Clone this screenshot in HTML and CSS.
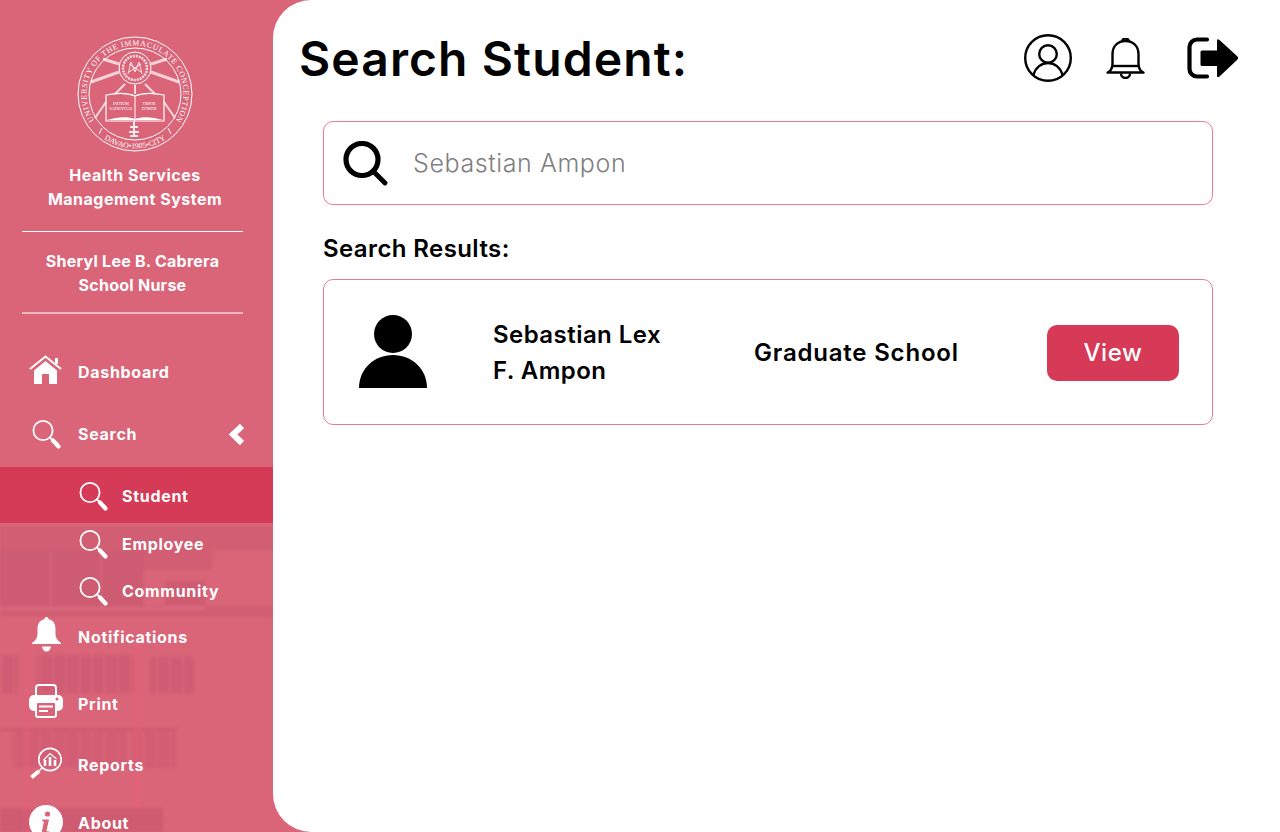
FILE: index.html
```html
<!DOCTYPE html>
<html lang="en">
<head>
  <meta charset="UTF-8">
  <title>Search Student</title>
  <link rel="stylesheet" href="styles.css">
</head>
<body>
  <div class="app">
    <aside class="sidebar">
      <!-- faded building photo behind the menu -->
      <svg class="building" viewBox="0 0 273 832" aria-hidden="true">
        <defs>
          <pattern id="panes" width="13" height="40" patternUnits="userSpaceOnUse">
            <rect width="13" height="40" fill="#c4526a"/>
            <rect width="2" height="40" fill="#d8647a"/>
          </pattern>
        </defs>
        <path d="M0 526H273V550H213V570H143V606H273V617H0z" fill="#c9586d" opacity=".5"/>
        <rect x="0" y="550" width="143" height="56" fill="#c9586d" opacity=".4"/>
        <rect x="165" y="581" width="40" height="24" fill="#c4526a" opacity=".5"/>
        <rect x="50" y="552" width="2" height="54" fill="#de6c80" opacity=".6"/>
        <rect x="100" y="552" width="2" height="54" fill="#de6c80" opacity=".6"/>
        <rect x="0" y="607" width="205" height="3" fill="#e07689" opacity=".5"/>
        <rect x="0" y="655" width="18" height="38" fill="url(#panes)" opacity=".42"/>
        <rect x="36" y="655" width="98" height="38" fill="url(#panes)" opacity=".42"/>
        <rect x="150" y="657" width="44" height="36" fill="url(#panes)" opacity=".42"/>
        <rect x="0" y="728" width="178" height="3" fill="#c4526a" opacity=".5"/>
        <rect x="12" y="731" width="115" height="37" fill="url(#panes)" opacity=".32"/>
        <rect x="130" y="731" width="46" height="37" fill="url(#panes)" opacity=".32"/>
        <rect x="0" y="808" width="163" height="24" fill="#c4526a" opacity=".5"/>
        <rect x="24" y="640" width="6" height="192" fill="#e85f78" opacity=".35"/>
        <rect x="134" y="640" width="7" height="168" fill="#e85f78" opacity=".4"/>
      </svg>

      <div class="brand">
        <svg class="logo" width="116" height="116" viewBox="0 0 116 116" fill="none" stroke="#fff">
          <defs>
            <path id="logoTop" d="M18.300 85.800A48.500 48.500 0 1 1 97.700 85.800"/>
            <path id="logoBottom" d="M21 98A54.500 54.500 0 0 0 95 98"/>
          </defs>
          <circle cx="58" cy="58" r="57" stroke-width="1"/>
          <circle cx="58" cy="58" r="46" stroke-width="1"/>
          <text class="logo-ring" fill="#fff" stroke="none"><textPath href="#logoTop" startOffset="50%" text-anchor="middle" textLength="208">UNIVERSITY OF THE IMMACULATE CONCEPTION</textPath></text>
          <text class="logo-ring" fill="#fff" stroke="none"><textPath href="#logoBottom" startOffset="50%" text-anchor="middle">DAVAO•1905•CITY</textPath></text>
          <path d="M42 28L26 23M42 36L14 46M74 28L90 23M74 36L102 46" stroke-width="3" opacity=".7"/>
          <path d="M48 48L38 58M68 48L78 58M58 49V58M29 66L18 82M87 66L98 82" stroke-width="2" opacity=".75"/>
          <circle cx="58" cy="32" r="16" stroke-width="1"/>
          <circle cx="58" cy="32" r="12" stroke-width="2.500" stroke-dasharray="2 1" opacity=".8"/>
          <path d="M51 38L54 26L58 36L62 26L65 38M52 28L64 36M64 28L52 36" stroke-width=".8"/>
          <path d="M29 59c10-2 22-2 29 1c7-3 19-3 29-1v26H29z" stroke-width="1.200"/>
          <path d="M58 60v25" stroke-width="1"/>
          <path d="M30 84c10-3 20-4 28-1c8-3 18-2 28 1z" fill="#fff" stroke="none"/>
          <text class="logo-book" x="44" y="69" fill="#fff" stroke="none" text-anchor="middle">INITIUM</text>
          <text class="logo-book" x="44" y="74" fill="#fff" stroke="none" text-anchor="middle">SAPIENTIAE</text>
          <text class="logo-book" x="72" y="69" fill="#fff" stroke="none" text-anchor="middle">TIMOR</text>
          <text class="logo-book" x="72" y="74" fill="#fff" stroke="none" text-anchor="middle">DOMINI</text>
          <path d="M57 85v16M53 91h8M52 96h10M53 100h8" stroke-width="2" opacity=".85"/>
          <path d="M22 98l3-6M94 98l-3-6" stroke-width="1"/>
        </svg>
        <p class="brand-line brand-title">Health Services<br>Management System</p>
        <hr class="rule">
        <p class="brand-line brand-user">Sheryl Lee B. Cabrera<br>School Nurse</p>
        <hr class="rule rule-thick">
      </div>

      <nav class="menu">
        <a class="item">
          <svg class="ico ico-up" width="33" height="29" viewBox="0 0 33 29" fill="#fff">
            <path d="M1 14L16.500 1.500L32 14" fill="none" stroke="#fff" stroke-width="2"/>
            <rect x="26" y="3" width="3" height="6"/>
            <path d="M5 15.500L16.500 6L28 15.500V29H20V19H13V29H5z"/>
          </svg>
          <span>Dashboard</span>
        </a>
        <a class="item">
          <svg class="ico ico-lens" width="29" height="29" viewBox="0 0 29 29" fill="none" stroke="#fff" stroke-linecap="round">
            <circle cx="11" cy="10.500" r="9.600" stroke-width="1.800"/>
            <path d="M18 17.500l2 2" stroke-width="1.800"/>
            <path d="M21 20.500l5.500 6" stroke-width="4.200"/>
          </svg>
          <span>Search</span>
          <svg class="chev" width="17" height="23" viewBox="0 0 17 23" fill="none" stroke="#fff">
            <path d="M14 3L5 11.500L14 20" stroke-width="6"/>
          </svg>
        </a>
        <a class="item sub active">
          <svg class="ico" width="29" height="29" viewBox="0 0 29 29" fill="none" stroke="#fff" stroke-linecap="round">
            <circle cx="11" cy="10.500" r="9.600" stroke-width="1.800"/>
            <path d="M18 17.500l2 2" stroke-width="1.800"/>
            <path d="M21 20.500l5.500 6" stroke-width="4.200"/>
          </svg>
          <span>Student</span>
        </a>
        <a class="item sub sub-a">
          <svg class="ico" width="29" height="29" viewBox="0 0 29 29" fill="none" stroke="#fff" stroke-linecap="round">
            <circle cx="11" cy="10.500" r="9.600" stroke-width="1.800"/>
            <path d="M18 17.500l2 2" stroke-width="1.800"/>
            <path d="M21 20.500l5.500 6" stroke-width="4.200"/>
          </svg>
          <span>Employee</span>
        </a>
        <a class="item sub sub-b">
          <svg class="ico" width="29" height="29" viewBox="0 0 29 29" fill="none" stroke="#fff" stroke-linecap="round">
            <circle cx="11" cy="10.500" r="9.600" stroke-width="1.800"/>
            <path d="M18 17.500l2 2" stroke-width="1.800"/>
            <path d="M21 20.500l5.500 6" stroke-width="4.200"/>
          </svg>
          <span>Community</span>
        </a>
        <a class="item item-notif">
          <svg class="ico ico-lens ico-up" width="29" height="35" viewBox="0 0 29 35" fill="#fff">
            <path d="M14.500 0c1.300 0 2.200 1 2.200 2.300c5 1 6.800 5 6.800 10v5c0 3.500 2 6.500 5.500 8.700v1H0v-1c3.500-2.200 5.500-5.200 5.500-8.700v-5c0-5 1.800-9 6.800-10c0-1.300.9-2.300 2.200-2.300z"/>
            <path d="M10 29.500h9c-.5 3-2.200 5-4.500 5s-4-2-4.500-5z"/>
          </svg>
          <span>Notifications</span>
        </a>
        <a class="item item-print">
          <svg class="ico ico-up" width="34" height="34" viewBox="0 0 34 34">
            <rect x="7" y="1" width="20" height="13" rx="3" fill="none" stroke="#fff" stroke-width="2"/>
            <rect x="0" y="11" width="34" height="16" rx="5" fill="#fff"/>
            <rect x="7" y="18" width="20" height="15" rx="2" fill="#da6579" stroke="#fff" stroke-width="2"/>
            <path d="M10 22.500h14M10 27h9" stroke="#fff" stroke-width="2"/>
            <circle cx="28" cy="15" r="1.500" fill="#da6579"/>
          </svg>
          <span>Print</span>
        </a>
        <a class="item item-reports">
          <svg class="ico ico-up-s" width="33" height="33" viewBox="0 0 33 33" fill="none" stroke="#fff">
            <circle cx="21" cy="12.500" r="11.200" stroke-width="1.700"/>
            <path d="M14.500 13L21 6.500L27.500 12" stroke-width="1.200"/>
            <path d="M16 19v-6M21 19v-9M26 19v-6" stroke-width="2.600"/>
            <path d="M13 21L10 24" stroke-width="1.500"/>
            <path d="M10 24L2.500 30.500" stroke-width="4"/>
          </svg>
          <span>Reports</span>
        </a>
        <a class="item item-about">
          <svg class="ico ico-up-s" width="34" height="34" viewBox="0 0 34 34">
            <circle cx="17" cy="17" r="17" fill="#fff"/>
            <circle cx="18.500" cy="9" r="2.600" fill="#da6579"/>
            <path d="M13.500 14.500h6.500l-2.500 11c-.2 1 .6 1.200 2.300.5l-.3 1.600c-2.500 1.200-6.800 1.400-6.500-1.800l2-9.300h-1.800z" fill="#da6579"/>
          </svg>
          <span>About</span>
        </a>
      </nav>
    </aside>

    <main class="main">
      <header class="top">
        <h1>Search Student:</h1>
        <div class="top-icons">
          <svg width="48" height="48" viewBox="0 0 48 48" fill="none" stroke="#000" stroke-width="2.400">
            <circle cx="24" cy="24" r="22.800"/>
            <circle cx="24" cy="20" r="8.800"/>
            <path d="M9.500 41c2-7.500 8-12 14.500-12s12.500 4.500 14.500 12"/>
          </svg>
          <svg class="top-bell" width="39" height="41" viewBox="0 0 39 41" fill="none" stroke="#000" stroke-width="2.400" stroke-linejoin="round">
            <path d="M1.500 34.500c3.500-1.500 5-4 5-9V16C6.500 8 12 3 19.500 3S32.500 8 32.500 16v9.500c0 5 1.500 7.500 5 9z"/>
            <path d="M7 28h25"/>
            <path d="M15 35.500a4.500 4.500 0 0 0 9 0"/>
            <path d="M16 3.500a3.500 3 0 0 1 7 0"/>
          </svg>
          <svg class="top-exit" width="52" height="42" viewBox="0 0 52 42">
            <path d="M20 2.500H10a7.500 7.500 0 0 0-7.500 7.500v22a7.500 7.500 0 0 0 7.500 7.500h10" fill="none" stroke="#000" stroke-width="4.200" stroke-linecap="round"/>
            <path d="M15 13.500H30V4Q30 1 32.500 3L50.500 19.500Q52 21 50.500 22.500L32.500 39.500Q30 41.500 30 38.500V29H15Q13.500 29 13.500 27.500V15Q13.500 13.500 15 13.500z"/>
          </svg>
        </div>
      </header>

      <section class="content">
        <div class="search-box">
          <svg width="45" height="45" viewBox="0 0 45 45" fill="none" stroke="#000" stroke-linecap="round">
            <circle cx="19" cy="18.500" r="16" stroke-width="5.200"/>
            <path d="M31 31l11 11" stroke-width="4.800"/>
          </svg>
          <span class="search-text">Sebastian Ampon</span>
        </div>

        <h2>Search Results:</h2>

        <div class="result">
          <svg class="avatar" width="68" height="73" viewBox="0 0 68 73">
            <circle cx="34" cy="19" r="19"/>
            <path d="M0 73C0 54 15 40 34 40s34 14 34 33z"/>
          </svg>
          <div class="result-name">Sebastian Lex<br>F. Ampon</div>
          <div class="result-dept">Graduate School</div>
          <button class="view-btn">View</button>
        </div>
      </section>
    </main>
  </div>
</body>
</html>
```

FILE: styles.css
```css
* {
  box-sizing: border-box;
}
body {
  margin: 0;
  font-family: Inter, "Liberation Sans", sans-serif;
  background: #da6579;
}
.app {
  display: flex;
  height: 832px;
  overflow: hidden;
}

/* sidebar */
.sidebar {
  position: relative;
  width: 273px;
  flex-shrink: 0;
  overflow: hidden;
  color: #fff;
}
.building {
  position: absolute;
  top: 0;
  left: 0;
  width: 273px;
  height: 832px;
  filter: blur(1.5px);
}
.brand {
  position: relative;
  display: flex;
  flex-direction: column;
  align-items: center;
  padding-top: 36px;
  padding-right: 8px;
}
.logo {
  margin-left: 5px;
}
.logo-ring {
  font-family: "Liberation Serif", serif;
  font-size: 7.8px;
}
.logo-book {
  font-family: "Liberation Serif", serif;
  font-size: 4px;
}
.brand-line {
  margin: 0;
  font-size: 16px;
  font-weight: 700;
  line-height: 24px;
  text-align: center;
  letter-spacing: .5px;
}
.brand-title {
  margin-top: 11px;
  margin-left: 5px;
}
.brand-user {
  margin-top: 17px;
  letter-spacing: .25px;
}
.rule {
  width: 221px;
  height: 1px;
  margin: 20px 0 0;
  border: 0;
  background: #fff;
}
.brand-user + .rule {
  margin-top: 15px;
}
.rule-thick {
  height: 2px;
  background: #eeb5bf;
}
.menu {
  position: relative;
  margin-top: 27px;
}
.item {
  display: flex;
  align-items: center;
  height: 62px;
  padding-left: 29px;
  font-size: 16px;
  font-weight: 700;
  line-height: 16px;
  letter-spacing: .7px;
}
.ico {
  flex-shrink: 0;
  margin-right: 16px;
}
.ico-lens {
  margin-left: 3px;
  margin-right: 17px;
}
.ico-up {
  margin-bottom: 6px;
}
.ico-up-s {
  margin-bottom: 3px;
}
.chev {
  margin-left: auto;
  margin-right: 28px;
}
.sub {
  height: 42px;
  padding-left: 76px;
}
.sub .ico {
  margin-left: 3px;
  margin-right: 14px;
}
.active {
  height: 56px;
  margin-top: 2px;
  padding-top: 2px;
  background: #d53a57;
}
.sub-b {
  height: 52px;
}
.item-notif {
  height: 40px;
}
.item-print {
  height: 66px;
  margin-top: 14px;
}
.item-print .ico,
.item-about .ico {
  margin-right: 15px;
}
.item-reports {
  height: 55px;
}
.item-about {
  height: 62px;
}

/* main panel */
.main {
  flex: 1;
  background: #fff;
  border-radius: 38px 0 0 38px;
  padding-left: 26px;
  color: #000;
}
.top {
  display: flex;
  align-items: center;
  justify-content: space-between;
  height: 121px;
  padding-right: 41px;
  padding-bottom: 5px;
}
h1 {
  margin: 0;
  font-size: 48px;
  font-weight: 600;
  letter-spacing: 1.1px;
}
.top-icons {
  display: flex;
  align-items: center;
}
.top-bell {
  margin-left: 34px;
}
.top-exit {
  margin-left: 42px;
}
.content {
  width: 890px;
  margin-left: 24px;
}
.search-box {
  display: flex;
  align-items: center;
  height: 84px;
  padding-left: 19px;
  border: 1px solid #ee7a90;
  border-radius: 10px;
}
.search-text {
  margin-left: 25px;
  font-size: 25px;
  font-weight: 300;
  letter-spacing: .6px;
  color: #808080;
}
h2 {
  margin: 28px 0 14px;
  font-size: 24px;
  line-height: 32px;
  font-weight: 600;
  letter-spacing: .4px;
}
.result {
  display: flex;
  align-items: center;
  height: 146px;
  padding-left: 35px;
  border: 1px solid #ee7a90;
  border-radius: 10px;
  font-size: 24px;
  font-weight: 600;
  letter-spacing: .45px;
}
.avatar {
  margin-bottom: 2px;
}
.result-name {
  width: 261px;
  margin-left: 66px;
  line-height: 36px;
  padding-top: 2px;
}
.result-dept {
  width: 293px;
  letter-spacing: .8px;
}
.view-btn {
  width: 132px;
  height: 56px;
  margin-top: 2px;
  padding: 0 0 2px;
  border: 0;
  border-radius: 10px;
  background: #d63a57;
  color: #fff;
  font: inherit;
  font-weight: 500;
  letter-spacing: .6px;
}
```
